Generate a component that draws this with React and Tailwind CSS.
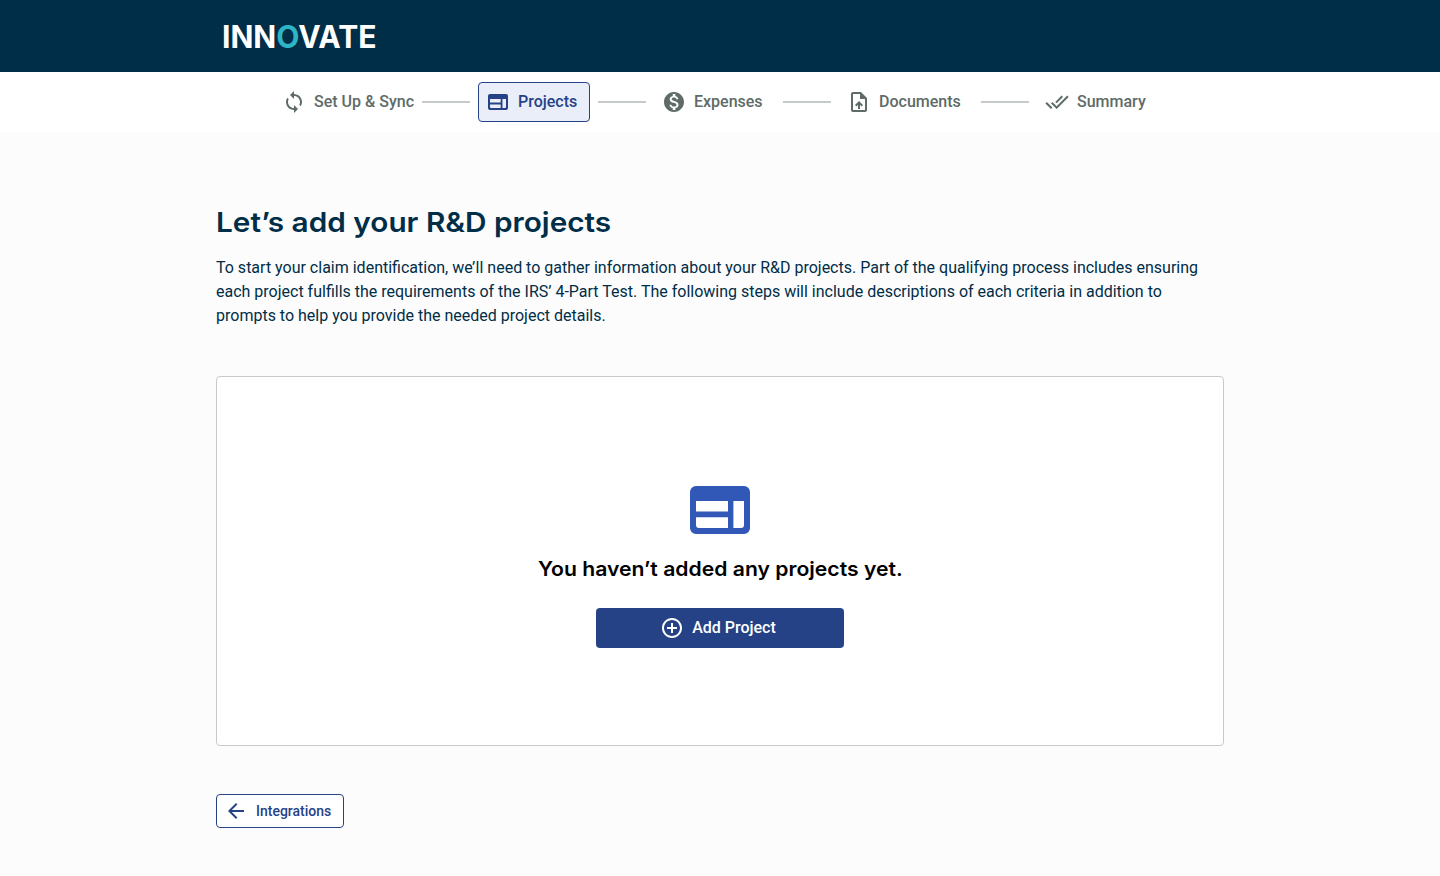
import React from 'react';
import {
    MdSync,
    MdMonetizationOn,
    MdOutlineUploadFile,
    MdDoneAll,
    MdAddCircleOutline,
    MdArrowBack,
} from 'react-icons/md';

const ProjectsIcon = ({ className }) => (
    <svg className={className} viewBox="0 0 72 72" fill="currentColor" xmlns="http://www.w3.org/2000/svg">
        <path
            fillRule="evenodd"
            d="M12 12h48a6 6 0 0 1 6 6v36a6 6 0 0 1-6 6H12a6 6 0 0 1-6-6V18a6 6 0 0 1 6-6zM12 27v10.5h32V27zM12 43.3V51a3 3 0 0 0 3 3h29V43.3zM49.4 27v27H57a3 3 0 0 0 3-3V27z"
        />
    </svg>
);

const STEPS = [
    { label: 'Set Up & Sync', icon: MdSync, width: 'w-[140px]' },
    { label: 'Projects', icon: ProjectsIcon, width: 'w-[112px]', active: true },
    { label: 'Expenses', icon: MdMonetizationOn, width: 'w-[121px]' },
    { label: 'Documents', icon: MdOutlineUploadFile, width: 'w-[134px]' },
    { label: 'Summary', icon: MdDoneAll, width: 'w-[129px]' },
];

const Logo = () => (
    <svg className="h-10 w-[164px]" viewBox="0 0 164 40" fontFamily="Inter, sans-serif" fontWeight="700" fontSize="31">
        <text x="6" y="32.3" textLength="154.5" lengthAdjust="spacingAndGlyphs" fill="#ffffff">
            INN<tspan fill="#2db5c6">O</tspan>VATE
        </text>
    </svg>
);

const Stepper = () => (
    <nav className="h-[60px] bg-white flex items-center justify-center gap-2">
        {STEPS.map(({ label, icon: Icon, width, active }, index) => (
            <React.Fragment key={label}>
                {index > 0 && <div className="w-12 h-0.5 bg-[#c4cbc9]"></div>}
                <div
                    className={`h-10 pl-[7px] flex items-center gap-2 rounded border whitespace-nowrap text-base font-medium ${width} ${active
                        ? 'border-[#254287] bg-[#eaeef8] text-[#254287]'
                        : 'border-transparent text-[#5e6b67]'}`}
                >
                    <Icon className="size-6 shrink-0" />
                    <span>{label}</span>
                </div>
            </React.Fragment>
        ))}
    </nav>
);

const App = () => {

    return (
        <div className="min-h-screen bg-[#fcfcfc] font-[Roboto,sans-serif]">
            <header className="h-[72px] bg-[#002d47]">
                <div className="w-[1008px] h-full mx-auto flex items-center">
                    <Logo />
                </div>
            </header>

            <Stepper />

            <main className="w-[1008px] mx-auto pt-[70px] pb-12 text-[#002d47]">
                <h1 className="w-fit origin-left scale-x-[1.082] text-[27.5px] leading-10 font-semibold whitespace-nowrap font-[Inter,sans-serif]">
                    Let’s add your R&amp;D projects
                </h1>
                <p className="mt-[14px] text-base leading-6">
                    To start your claim identification, we’ll need to gather information about your R&amp;D projects. Part of the qualifying process includes ensuring each project fulfills the requirements of the IRS’ 4-Part Test. The following steps will include descriptions of each criteria in addition to prompts to help you provide the needed project details.
                </p>

                <section className="mt-12 h-[370px] pt-[97px] bg-white border border-[#c4cbc9] rounded flex flex-col items-center">
                    <ProjectsIcon className="size-[72px] text-[#3157b7]" />
                    <h2 className="mt-[9px] scale-x-[1.058] text-[20px] leading-7 font-semibold text-black whitespace-nowrap font-[Inter,sans-serif]">
                        You haven’t added any projects yet.
                    </h2>
                    <button className="mt-[25px] w-[248px] h-10 pr-1 rounded bg-[#254287] text-white text-base font-medium flex items-center justify-center gap-2 cursor-pointer">
                        <MdAddCircleOutline className="size-6" />
                        <span>Add Project</span>
                    </button>
                </section>

                <button className="mt-12 w-32 h-[34px] pl-[7px] rounded border border-[#254287] bg-white text-[#254287] text-sm font-medium flex items-center gap-2 cursor-pointer">
                    <MdArrowBack className="size-6" />
                    <span>Integrations</span>
                </button>
            </main>
        </div>
    );
}

export default App;
